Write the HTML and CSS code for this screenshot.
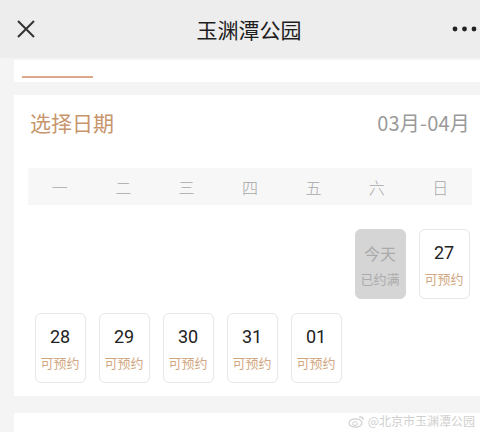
FILE: index.html
```html
<!DOCTYPE html>
<html lang="zh-CN">
<head>
  <meta charset="UTF-8">
  <meta name="viewport" content="width=device-width, initial-scale=1.0">
  <title>玉渊潭公园</title>
  <link rel="stylesheet" href="styles.css">
</head>
<body>
  <div class="topbar">
    <svg class="close-icon" width="20" height="20" viewBox="0 0 20 20">
      <path d="M2 2 L18 18 M18 2 L2 18" stroke="#333" stroke-width="2" fill="none"/>
    </svg>
    <div class="topbar-title">玉渊潭公园</div>
    <svg class="more-icon" width="26" height="6" viewBox="0 0 26 6">
      <circle cx="3" cy="3" r="2.4" fill="#222"/>
      <circle cx="12.5" cy="3" r="2.4" fill="#222"/>
      <circle cx="22" cy="3" r="2.4" fill="#222"/>
    </svg>
  </div>

  <div class="tabs">
    <div class="tab-line"></div>
  </div>

  <div class="card">
    <div class="card-head">
      <div class="card-title">选择日期</div>
      <div class="card-range">03月-04月</div>
    </div>

    <div class="weekdays">
      <span>一</span><span>二</span><span>三</span><span>四</span><span>五</span><span>六</span><span>日</span>
    </div>

    <div class="days">
      <div class="day empty"></div>
      <div class="day empty"></div>
      <div class="day empty"></div>
      <div class="day empty"></div>
      <div class="day empty"></div>
      <div class="day full"><div class="num">今天</div><div class="state">已约满</div></div>
      <div class="day"><div class="num">27</div><div class="state">可预约</div></div>
      <div class="day"><div class="num">28</div><div class="state">可预约</div></div>
      <div class="day"><div class="num">29</div><div class="state">可预约</div></div>
      <div class="day"><div class="num">30</div><div class="state">可预约</div></div>
      <div class="day"><div class="num">31</div><div class="state">可预约</div></div>
      <div class="day"><div class="num">01</div><div class="state">可预约</div></div>
    </div>
  </div>

  <div class="card next-card">
    <div class="watermark">
      <svg class="weibo-icon" width="17" height="13" viewBox="0 0 17 13">
        <ellipse cx="7.5" cy="8" rx="6.5" ry="4.2" fill="none" stroke="#d0d0d0" stroke-width="1.2"/>
        <ellipse cx="7" cy="8.6" rx="2.4" ry="1.8" fill="none" stroke="#d0d0d0" stroke-width="1"/>
        <path d="M11 2 Q15 1.5 15.5 5" stroke="#d0d0d0" stroke-width="1.2" fill="none"/>
      </svg>
      <span>@北京市玉渊潭公园</span>
    </div>
  </div>
</body>
</html>
```

FILE: styles.css
```css
body {
  margin: 0;
  width: 480px;
  height: 432px;
  overflow: hidden;
  background-color: #f4f4f4;
  font-family: "Noto Sans CJK SC", "Noto Sans", sans-serif;
  color: #222;
}
.topbar {
  height: 58px;
  background-color: #ededed;
  display: flex;
  align-items: center;
  justify-content: space-between;
  padding: 0 2px 0 16px;
}
.close-icon {
  display: block;
}
.topbar-title {
  font-size: 21px;
  font-weight: 400;
  color: #1e1e1e;
  margin-left: 10px;
}
.more-icon {
  display: block;
}
.tabs {
  margin: 2px 0 0 14px;
  height: 22px;
  background-color: #fff;
  display: flex;
  align-items: flex-end;
  padding-left: 8px;
}
.tab-line {
  width: 71px;
  height: 2px;
  margin-bottom: 4px;
  background-color: #d9a98a;
}
.card {
  margin: 13px 0 0 14px;
  background-color: #fff;
  padding: 11px 8px 13px 14px;
}
.card-head {
  display: flex;
  justify-content: space-between;
  align-items: center;
  padding: 0 2px 0 2px;
  height: 32px;
}
.card-title {
  font-size: 21px;
  color: #c8956c;
}
.card-range {
  font-size: 20px;
  color: #9a9a9a;
  letter-spacing: 0.2px;
}
.weekdays {
  margin-top: 30px;
  height: 37px;
  background-color: #f7f7f7;
  display: grid;
  grid-template-columns: repeat(7, 1fr);
  align-items: center;
  justify-items: center;
  font-size: 16px;
  font-weight: 300;
  color: #a8a8a8;
}
.days {
  margin-top: 24px;
  display: grid;
  grid-template-columns: repeat(7, 64px);
  row-gap: 14px;
}
.day {
  width: 51px;
  height: 70px;
  box-sizing: border-box;
  justify-self: center;
  border: 1px solid #e6e6e6;
  border-radius: 6px;
  display: flex;
  flex-direction: column;
  align-items: center;
  justify-content: center;
}
.day.empty {
  border: none;
}
.num {
  font-family: "Roboto", "Noto Sans CJK SC", sans-serif;
  font-size: 18px;
  line-height: 26px;
  color: #222;
}
.state {
  font-size: 13px;
  line-height: 20px;
  margin-top: 3px;
  color: #d2a882;
}
.day.full {
  background-color: #d5d5d5;
  border-color: #d5d5d5;
}
.day.full .num {
  font-family: "Noto Sans CJK SC", sans-serif;
  font-size: 16px;
  color: #ababab;
}
.day.full .state {
  color: #ababab;
}
.next-card {
  margin-top: 17px;
  height: 40px;
  padding: 0;
  position: relative;
}
.watermark {
  position: absolute;
  right: 5px;
  top: 0;
  display: flex;
  align-items: center;
  gap: 3px;
  font-size: 12px;
  line-height: 16px;
  color: #d0d0d0;
}
.weibo-icon {
  display: block;
}
```
